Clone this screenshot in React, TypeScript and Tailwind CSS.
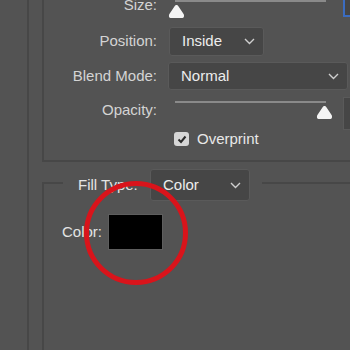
import { ReactNode } from "react";

function Chevron() {
  return (
    <svg width="11" height="7" viewBox="0 0 11 7" className="shrink-0">
      <polyline
        points="1,1 5.5,5.5 10,1"
        fill="none"
        stroke="#cfcfcf"
        strokeWidth="1.4"
      />
    </svg>
  );
}

function Dropdown({ value, className }: { value: string; className: string }) {
  return (
    <div
      className={`flex items-center justify-between rounded-[3px] border border-[#5a5a5a] bg-[#464646] pl-[12px] pr-[8px] text-[#ededed] ${className}`}
    >
      <span>{value}</span>
      <Chevron />
    </div>
  );
}

function Thumb() {
  return (
    <svg width="17" height="15" viewBox="0 0 17 15">
      <path
        d="M8.5 1 C9.3 1 9.8 1.5 10.4 2.3 L15.6 10 C16.3 11 16.3 14 14.5 14 L2.5 14 C0.7 14 0.7 11 1.4 10 L6.6 2.3 C7.2 1.5 7.7 1 8.5 1 Z"
        fill="#f4f4f4"
      />
    </svg>
  );
}

function Slider({ percent }: { percent: number }) {
  return (
    <div className="relative h-[18px] w-[165px]">
      <div className="mx-[7px] h-[2px] bg-[#8a8a8a]" />
      <div
        className="absolute top-[4px]"
        style={{ left: `${(percent / 100) * 148}px` }}
      >
        <Thumb />
      </div>
    </div>
  );
}

function Row({
  label,
  className,
  children,
}: {
  label: string;
  className: string;
  children: ReactNode;
}) {
  return (
    <div className={`flex items-center ${className}`}>
      <div className="w-[113px] shrink-0 text-right text-[#d4d4d4]">{label}</div>
      <div className="ml-[11px] flex h-full flex-1 items-center">{children}</div>
    </div>
  );
}

export default function App() {
  return (
    <div
      className="relative flex h-[350px] w-[350px] overflow-hidden bg-[#535353] text-[15px]"
      style={{ fontFamily: '"Liberation Sans", Arial, sans-serif' }}
    >
      <div className="ml-[27px] flex min-w-0 flex-1 flex-col border-l-2 border-[#474747] pl-[13px]">
        <div className="-mt-[10px] flex flex-col border-b-2 border-l-2 border-[#474747] pb-[12px]">
          <Row label="Size:" className="h-[30px]">
            <div className="flex h-full items-start">
              <div className="mt-[10px]">
                <Slider percent={0} />
              </div>
              <div className="ml-[10px] h-[27px] w-[40px] shrink-0 border-2 border-[#3b6cc0] bg-[#454545]" />
            </div>
          </Row>
          <Row label="Position:" className="mt-[7px] h-[29px]">
            <Dropdown value="Inside" className="ml-[1px] h-[29px] w-[95px]" />
          </Row>
          <Row label="Blend Mode:" className="mt-[6px] h-[28px]">
            <Dropdown value="Normal" className="h-[28px] w-[180px]" />
          </Row>
          <Row label="Opacity:" className="mt-[8px] h-[24px]">
            <div className="flex h-full items-start">
              <div className="mt-[3px]">
                <Slider percent={100} />
              </div>
              <div className="-mt-[1px] ml-[10px] h-[33px] w-[40px] shrink-0 border border-[#5a5a5a] bg-[#464646]" />
            </div>
          </Row>
          <Row label="" className="mt-[8px] h-[18px]">
            <div className="ml-[6px] flex items-center">
              <div className="flex h-[14px] w-[15px] items-center justify-center rounded-[3px] bg-[#d6d6d6]">
                <svg width="10" height="9" viewBox="0 0 10 9">
                  <polyline
                    points="1.5,4.5 4,7 8.5,1.5"
                    fill="none"
                    stroke="#2a2a2a"
                    strokeWidth="2"
                  />
                </svg>
              </div>
              <span className="ml-[8px] text-[#e8e8e8]">Overprint</span>
            </div>
          </Row>
        </div>

        <div className="mt-[20px] flex flex-1 flex-col border-l-2 border-t-2 border-[#474747]">
          <div className="-mt-[15px] ml-[19px] flex h-[32px] w-fit items-center bg-[#535353] pl-[15px] pr-[12px]">
            <span className="w-[72px] text-[#e4e4e4]">Fill Type:</span>
            <Dropdown value="Color" className="h-[32px] w-[100px]" />
          </div>
          <div className="mt-[13px] flex items-center pl-[18px]">
            <span className="w-[46px] text-[#e4e4e4]">Color:</span>
            <div className="h-[36px] w-[55px] border border-[#5e5e5e] bg-black" />
          </div>
        </div>
      </div>

      <div className="absolute left-[84px] top-[181px] h-[104px] w-[104px] rounded-full border-[5px] border-[#d9141b]" />
    </div>
  );
}
